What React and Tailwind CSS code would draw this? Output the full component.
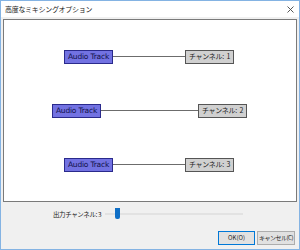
import React from 'react';

const jp = { fontFamily: '"Noto Sans CJK JP", "Noto Sans", sans-serif' };
const latin = { fontFamily: '"DejaVu Sans", "Liberation Sans", sans-serif' };

function TrackRow({ offset, lineWidth, channel }) {
  return (
    <div className="flex items-center h-[14px]" style={{ paddingLeft: offset }}>
      <div
        className="w-[49px] h-[14px] bg-[#7272e2] border border-[#2a2a8c] flex items-center justify-center text-[7.5px] text-[#10104a] leading-none whitespace-nowrap tracking-[-0.2px]"
        style={latin}
      >
        Audio Track
      </div>
      <div className="h-px bg-[#6c6c6c]" style={{ width: lineWidth }} />
      <div
        className="w-[49px] h-[14px] bg-[#d0d0d0] border border-[#555] flex items-center justify-center text-[7px] text-[#222] leading-none whitespace-nowrap tracking-[-0.3px]"
        style={jp}
      >
        チャンネル:&nbsp;&nbsp;{channel}
      </div>
    </div>
  );
}

export default function App() {
  return (
    <div className="w-[300px] h-[250px] border border-[#84b3e3] bg-[#f0f0f0] flex flex-col overflow-hidden">
      {/* title bar */}
      <div className="h-[16px] bg-white flex items-center justify-between pl-[4px] pr-[4px]">
        <span className="text-[7px] text-[#222] leading-none whitespace-nowrap tracking-[-0.3px]" style={jp}>
          高度なミキシングオプション
        </span>
        <svg width="7" height="7" viewBox="0 0 7 7" className="mr-[1px]">
          <path d="M0.5 0.5 L6.5 6.5 M6.5 0.5 L0.5 6.5" stroke="#444" strokeWidth="0.9" />
        </svg>
      </div>

      <div className="flex-1 flex flex-col px-[2px] pt-[2px]">
        {/* canvas */}
        <div className="h-[183px] bg-white border border-[#7a7a7a] flex flex-col justify-center gap-[40px]">
          <TrackRow offset={60} lineWidth={72} channel={1} />
          <TrackRow offset={48} lineWidth={97} channel={2} />
          <TrackRow offset={60} lineWidth={72} channel={3} />
        </div>

        {/* slider row */}
        <div className="flex items-center h-[14px] mt-[5px] pl-[50px]">
          <span className="text-[6.5px] text-[#222] leading-none w-[52px] whitespace-nowrap tracking-[-0.4px]" style={jp}>
            出力チャンネル: 3
          </span>
          <div className="relative w-[138px] h-[12px] flex items-center">
            <div className="w-full h-[2px] bg-[#e2e2e2]" />
            <div className="absolute left-[10px] top-0 w-[5px] h-[11px] bg-[#0f6fc6] rounded-b-[2px]" />
          </div>
        </div>

        {/* buttons */}
        <div className="flex justify-end gap-[2px] mt-[10px] pr-[2px]">
          <div
            className="w-[37px] h-[14px] shrink-0 bg-[#e1e1e1] border border-[#0078d7] flex items-center justify-center text-[6px] text-[#222] leading-none whitespace-nowrap"
            style={jp}
          >
            OK(O)
          </div>
          <div
            className="w-[38px] h-[14px] shrink-0 bg-[#e1e1e1] border border-[#adadad] flex items-center justify-center text-[6px] text-[#222] leading-none whitespace-nowrap tracking-[-0.5px] overflow-hidden"
            style={jp}
          >
            キャンセル(C)
          </div>
        </div>
      </div>
    </div>
  );
}
